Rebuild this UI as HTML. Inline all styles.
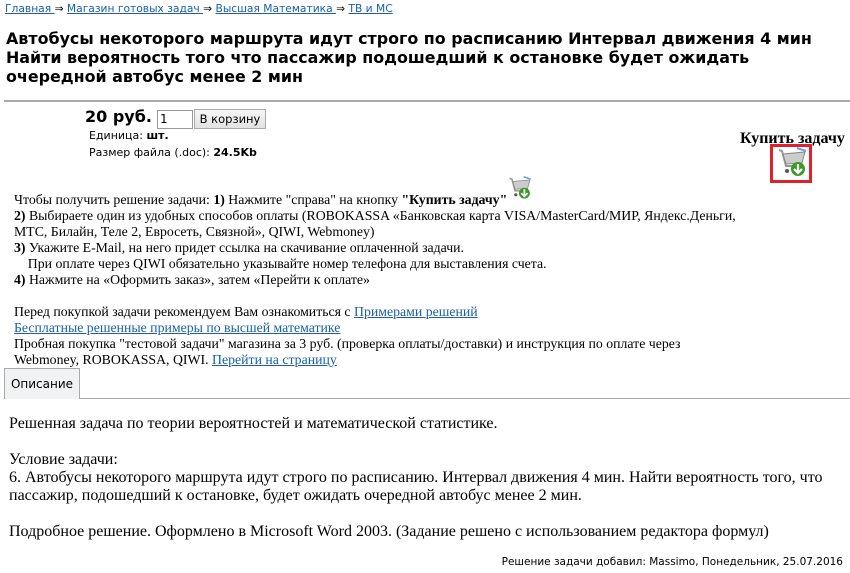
<!DOCTYPE html>
<html><head><meta charset="utf-8"><style>
body{margin:0;width:850px;height:573px;background:#fff;position:relative;overflow:hidden;color:#000}
.a{position:absolute;white-space:nowrap}
.s{font-family:"DejaVu Sans","Liberation Sans",sans-serif}
.r{font-family:"Liberation Serif","DejaVu Serif",serif}
a{color:#1a5fa8;text-decoration:underline}
.bc{font-size:10.7px;left:5px;top:2px}
.bc a{color:#1a5fa8}
h1{position:absolute;left:6px;top:29px;margin:0;font:bold 15.9px/19px "DejaVu Sans",sans-serif;width:840px}
.ins{font-size:13.8px;line-height:16px}
.desc{font-size:16px;line-height:18px}
</style></head><body>
<div class="a s bc"><a>Главная </a>⇒ <a>Магазин готовых задач </a>⇒ <a>Высшая Математика </a>⇒ <a>ТВ и МС</a></div>
<h1>Автобусы некоторого маршрута идут строго по расписанию Интервал движения 4 мин Найти вероятность того что пассажир подошедший к остановке будет ожидать очередной автобус менее 2 мин</h1>
<div class="a" style="left:4px;top:100px;width:846px;height:0;border-top:2px solid #aaa"></div>
<div class="a s" style="left:85px;top:107px;font-weight:bold;font-size:16px">20 руб.</div>
<div class="a" style="left:157px;top:110px;height:17px;border:1px solid #999;font:12px 'DejaVu Sans',sans-serif;line-height:17px;padding-left:2px;width:32px">1</div>
<div class="a s" style="left:194px;top:109px;width:70px;height:18px;border:1px solid #aaa;background:linear-gradient(#f6f6f6,#e2e2e2);font-size:11.5px;line-height:18px;text-align:center">В корзину</div>
<div class="a s" style="left:89px;top:129px;font-size:11px">Единица: <b>шт.</b></div>
<div class="a s" style="left:89px;top:146px;font-size:11px">Размер файла (.doc): <b>24.5Kb</b></div>
<div class="a r" style="left:740px;top:130px;font-size:16px;font-weight:bold">Купить задачу</div>
<div class="a" style="left:770px;top:144px;width:36px;height:33px;border:3px solid #e0202a"></div>
<svg class="a" style="left:777px;top:147px" width="32" height="32" viewBox="0 0 32 32"><path d="M2 3 L5 4 L9 19 L24 19" fill="none" stroke="#999" stroke-width="2"/><path d="M6 7 L28 5 L25 16 L9 17Z" fill="#ccc" stroke="#888"/><path d="M20 1 L29 4" stroke="#6aa0e0" stroke-width="2"/><circle cx="10" cy="24" r="2" fill="#555"/><circle cx="22" cy="24" r="2" fill="#555"/><circle cx="21" cy="22" r="7" fill="#3a9a2a"/><path d="M21 17 V26 M17 22 L21 26 L25 22" stroke="#fff" stroke-width="2.2" fill="none"/></svg>
<svg class="a" style="left:508px;top:176px" width="25" height="25" viewBox="0 0 32 32"><path d="M2 3 L5 4 L9 19 L24 19" fill="none" stroke="#999" stroke-width="2"/><path d="M6 7 L28 5 L25 16 L9 17Z" fill="#ccc" stroke="#888"/><path d="M20 1 L29 4" stroke="#6aa0e0" stroke-width="2"/><circle cx="10" cy="24" r="2" fill="#555"/><circle cx="21" cy="22" r="7" fill="#3a9a2a"/><path d="M21 17 V26 M17 22 L21 26 L25 22" stroke="#fff" stroke-width="2.2" fill="none"/></svg>
<div class="a r ins" style="left:14px;top:192px">Чтобы получить решение задачи: <b>1)</b> Нажмите "справа" на кнопку <b>"Купить задачу"</b><br>
<b>2)</b> Выбираете один из удобных способов оплаты (ROBOKASSA «Банковская карта VISA/MasterCard/МИР, Яндекс.Деньги,<br>МТС, Билайн, Теле 2, Евросеть, Связной», QIWI, Webmoney)<br>
<b>3)</b> Укажите E-Mail, на него придет ссылка на скачивание оплаченной задачи.<br>
&nbsp;&nbsp;&nbsp;&nbsp;При оплате через QIWI обязательно указывайте номер телефона для выставления счета.<br>
<b>4)</b> Нажмите на «Оформить заказ», затем «Перейти к оплате»<br><br>
Перед покупкой задачи рекомендуем Вам ознакомиться с <a>Примерами решений</a><br>
<a>Бесплатные решенные примеры по высшей математике</a><br>
Пробная покупка "тестовой задачи" магазина за 3 руб. (проверка оплаты/доставки) и инструкция по оплате через<br>
Webmoney, ROBOKASSA, QIWI. <a>Перейти на страницу</a></div>
<div class="a" style="left:4px;top:398px;width:846px;border-top:1px solid #aaa"></div>
<div class="a s" style="left:4px;top:368px;width:74px;height:30px;border:1px solid #aaa;border-bottom:none;background:#f1f2f4;font-size:12px;line-height:30px;text-align:center">Описание</div>
<div class="a r desc" style="left:9px;top:415px">Решенная задача по теории вероятностей и математической статистике.<br><br>Условие задачи:<br>6. Автобусы некоторого маршрута идут строго по расписанию. Интервал движения 4 мин. Найти вероятность того, что<br>пассажир, подошедший к остановке, будет ожидать очередной автобус менее 2 мин.<br><br>Подробное решение. Оформлено в Microsoft Word 2003. (Задание решено с использованием редактора формул)</div>
<div class="a s" style="right:7px;top:556px;font-size:10.5px">Решение задачи добавил: Massimo, Понедельник, 25.07.2016</div>
</body></html>
